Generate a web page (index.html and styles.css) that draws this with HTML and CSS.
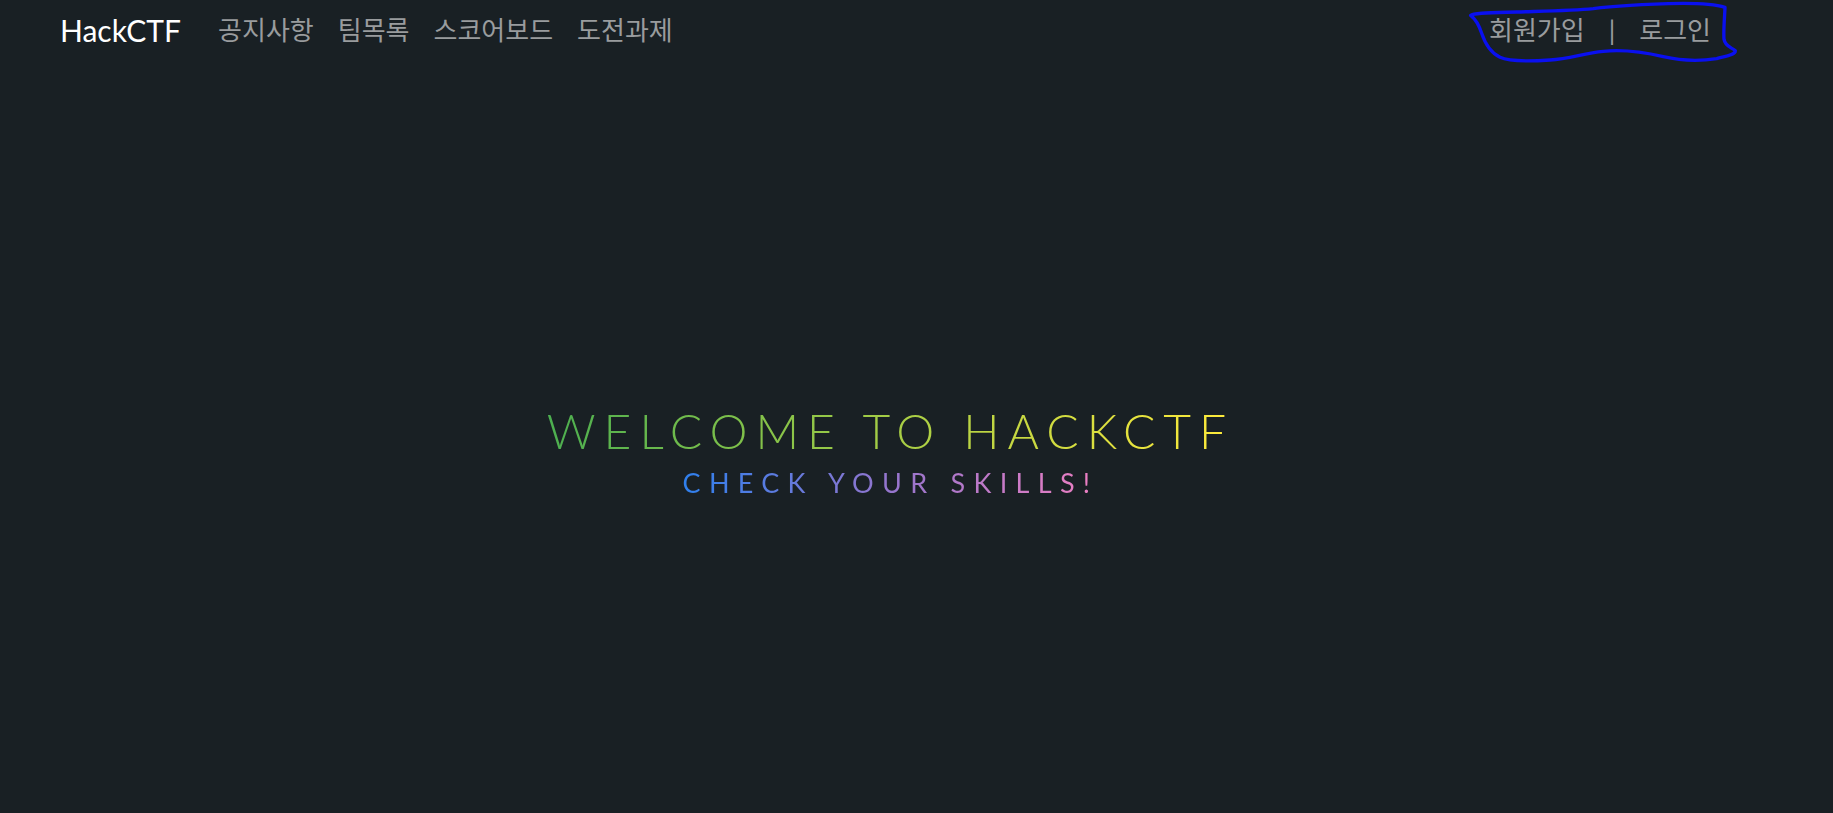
FILE: index.html
```html
<!DOCTYPE html>
<html lang="ko">
<head>
<meta charset="utf-8">
<title>HackCTF</title>
<link rel="stylesheet" href="styles.css">
</head>
<body>
<nav class="navbar">
  <a class="brand" href="#">HackCTF</a>
  <ul class="nav-links">
    <li><a href="#">공지사항</a></li>
    <li><a href="#">팀목록</a></li>
    <li><a href="#">스코어보드</a></li>
    <li><a href="#">도전과제</a></li>
  </ul>
  <div class="nav-right">
    <a href="#">회원가입</a>
    <span class="sep">|</span>
    <a href="#">로그인</a>
    <svg class="scribble" viewBox="0 0 960 210" width="320" height="70">
      <path d="M62 46 C70 38 120 38 200 36 C300 33 370 32 430 26 C500 16 600 12 700 10 C760 10 800 14 825 22 C824 50 820 90 822 118 C825 140 845 142 856 152 C856 165 830 168 800 176 C760 182 700 184 640 170 C580 156 520 148 460 154 C400 160 360 176 300 180 C240 184 180 186 150 172 C120 158 105 130 95 100 C88 78 80 60 62 46 Z" fill="none" stroke="#0a10f0" stroke-width="10" stroke-linejoin="round"/>
    </svg>
  </div>
</nav>
<main class="hero">
  <h1 class="title">WELCOME TO HACKCTF</h1>
  <p class="subtitle">CHECK YOUR SKILLS!</p>
</main>
</body>
</html>
```
FILE: styles.css
```css
html, body {
  margin: 0;
  padding: 0;
  background: #192024;
  height: 100%;
}
body {
  font-family: Lato, "Noto Sans CJK KR", sans-serif;
  overflow: hidden;
}
a {
  text-decoration: none;
}
.navbar {
  display: flex;
  align-items: center;
  height: 60px;
  padding: 0 0 0 60px;
}
.brand {
  color: #ffffff;
  font-size: 30px;
  margin-right: 25px;
  line-height: 1;
}
.nav-links {
  display: flex;
  list-style: none;
  margin: 0;
  padding: 0;
}
.nav-links li a,
.nav-right a,
.nav-right .sep {
  color: #999c9e;
  font-family: Lato, "Noto Sans CJK KR", sans-serif;
  font-size: 26px;
  line-height: 1;
}
.nav-links li a {
  display: block;
  padding: 0 12px;
}
.nav-right {
  position: relative;
  display: flex;
  align-items: center;
  align-self: stretch;
  margin-left: auto;
  margin-right: 122px;
}
.nav-right .sep {
  margin: 0 24px;
}
.scribble {
  position: absolute;
  right: -59px;
  top: 0;
  pointer-events: none;
}
.hero {
  display: flex;
  flex-direction: column;
  align-items: center;
  justify-content: center;
  height: 753px;
  padding-right: 52px;
  box-sizing: border-box;
  padding-top: 30px;
}
.title {
  margin: 0;
  font-weight: 300;
  font-size: 48px;
  letter-spacing: 8px;
  line-height: 1;
  background: linear-gradient(to right, #4caf50, #ffeb3b);
  -webkit-background-clip: text;
  background-clip: text;
  color: transparent;
}
.subtitle {
  margin: 14px 0 0;
  font-weight: 400;
  font-size: 27px;
  letter-spacing: 8.3px;
  line-height: 1;
  background: linear-gradient(to right, #2f80ed, #9575cd, #ee7fc2);
  -webkit-background-clip: text;
  background-clip: text;
  color: transparent;
}
```
